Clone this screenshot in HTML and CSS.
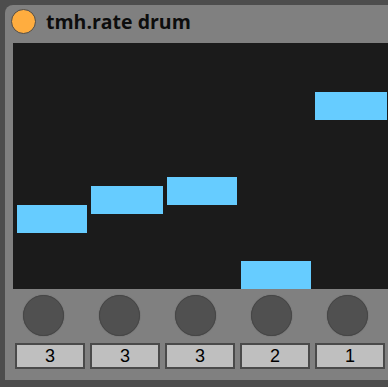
FILE: index.html
```html
<!DOCTYPE html>
<html lang="en">
<head>
    <meta charset="UTF-8">
    <title>tmh.rate drum</title>
    <link rel="stylesheet" href="styles.css">
</head>
<body>

<div class="device">
    <div class="title-bar">
        <span class="power"></span>
        <span class="title">tmh.rate drum</span>
    </div>

    <div class="display">
        <div class="column"><div class="bar" style="margin-top: 162px"></div></div>
        <div class="column wide"><div class="bar" style="margin-top: 143px"></div></div>
        <div class="column"><div class="bar" style="margin-top: 134px"></div></div>
        <div class="column"><div class="bar" style="margin-top: 218px"></div></div>
        <div class="column wide"><div class="bar" style="margin-top: 49px"></div></div>
    </div>

    <div class="knobs">
        <div class="knob"></div>
        <div class="knob"></div>
        <div class="knob"></div>
        <div class="knob"></div>
        <div class="knob"></div>
    </div>

    <div class="numbers">
        <div class="number">3</div>
        <div class="number">3</div>
        <div class="number">3</div>
        <div class="number">2</div>
        <div class="number">1</div>
    </div>
</div>

</body>
</html>
```

FILE: styles.css
```css
html {
    overflow: hidden;
}
body {
    margin: 0;
    padding: 5px 0 0 5px;
    background-color: #4d4d4d;
    font-family: "Liberation Sans", Arial, sans-serif;
}
.device {
    width: 400px;
    height: 375px;
    background-color: #808080;
    border-top-left-radius: 8px;
}
.title-bar {
    display: flex;
    align-items: center;
    height: 38px;
    padding-left: 6px;
}
.power {
    width: 23px;
    height: 23px;
    border-radius: 50%;
    background-color: #ffad3f;
    border: 1px solid #4c4c4c;
    margin-top: -5px;
}
.title {
    margin-left: 10px;
    margin-top: -6px;
    font-family: "Open Sans", sans-serif;
    font-weight: 700;
    font-size: 19.5px;
    color: #0d0d0d;
}
.display {
    display: flex;
    gap: 4px;
    height: 246px;
    margin-left: 8px;
    padding-left: 4px;
    background-color: #1b1b1b;
}
.column {
    width: 70px;
    flex-shrink: 0;
}
.column.wide {
    width: 72px;
}
.bar {
    height: 28px;
    background-color: #66ccff;
}
.knobs {
    display: flex;
    gap: 35px;
    margin: 6px 0 0 18px;
}
.knob {
    width: 39px;
    height: 39px;
    border-radius: 50%;
    background-color: #505050;
    border: 1px solid #464646;
    box-shadow: 0 0 1px #444;
}
.numbers {
    display: flex;
    gap: 5px;
    margin: 7px 0 0 10px;
}
.number {
    width: 66px;
    height: 22px;
    border: 2px solid #4a4a4a;
    background-color: #bfbfbf;
    text-align: center;
    font-size: 18px;
    line-height: 23px;
    color: #000;
}
```
